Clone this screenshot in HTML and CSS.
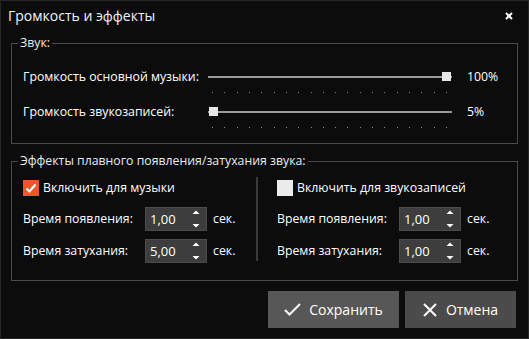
FILE: index.html
```html
<!DOCTYPE html>
<html lang="ru">
<head>
    <meta charset="UTF-8">
    <title>Громкость и эффекты</title>
    <link rel="stylesheet" href="styles.css">
</head>
<body>
    <div class="window">
        <header class="titlebar">
            <span class="title">Громкость и эффекты</span>
            <svg class="close" viewBox="0 0 8 8">
                <path d="M1 1l6 6M7 1l-6 6"></path>
            </svg>
        </header>

        <fieldset class="group sound">
            <legend>Звук:</legend>
            <div class="sliders">
                <div class="slider-row">
                    <span class="label">Громкость основной музыки:</span>
                    <div class="slider">
                        <div class="track"><span class="thumb" style="left: 234px"></span></div>
                        <div class="ticks"><i></i><i></i><i></i><i></i><i></i><i></i><i></i><i></i><i></i><i></i><i></i><i></i><i></i><i></i><i></i><i></i><i></i><i></i><i></i><i></i></div>
                    </div>
                    <span class="value">100%</span>
                </div>
                <div class="slider-row">
                    <span class="label">Громкость звукозаписей:</span>
                    <div class="slider">
                        <div class="track"><span class="thumb" style="left: 1px"></span></div>
                        <div class="ticks"><i></i><i></i><i></i><i></i><i></i><i></i><i></i><i></i><i></i><i></i><i></i><i></i><i></i><i></i><i></i><i></i><i></i><i></i><i></i><i></i></div>
                    </div>
                    <span class="value">5%</span>
                </div>
            </div>
        </fieldset>

        <fieldset class="group effects">
            <legend>Эффекты плавного появления/затухания звука:</legend>
            <div class="columns">
                <div class="column">
                    <label class="check">
                        <span class="box checked">
                            <svg viewBox="0 0 16 16"><path d="M3.5 8.5l3 3 6-7"></path></svg>
                        </span>
                        Включить для музыки
                    </label>
                    <div class="spin-row">
                        <span>Время появления:</span>
                        <div class="spin">
                            <span>1,00</span>
                            <svg class="arrows" viewBox="0 0 8 20"><path d="M0.5 5L4 1.5 7.5 5zM0.5 15L4 18.5 7.5 15z"></path></svg>
                        </div>
                        <span class="unit">сек.</span>
                    </div>
                    <div class="spin-row">
                        <span>Время затухания:</span>
                        <div class="spin">
                            <span>5,00</span>
                            <svg class="arrows" viewBox="0 0 8 20"><path d="M0.5 5L4 1.5 7.5 5zM0.5 15L4 18.5 7.5 15z"></path></svg>
                        </div>
                        <span class="unit">сек.</span>
                    </div>
                </div>

                <div class="separator"></div>

                <div class="column">
                    <label class="check">
                        <span class="box"></span>
                        Включить для звукозаписей
                    </label>
                    <div class="spin-row">
                        <span>Время появления:</span>
                        <div class="spin">
                            <span>1,00</span>
                            <svg class="arrows" viewBox="0 0 8 20"><path d="M0.5 5L4 1.5 7.5 5zM0.5 15L4 18.5 7.5 15z"></path></svg>
                        </div>
                        <span class="unit">сек.</span>
                    </div>
                    <div class="spin-row">
                        <span>Время затухания:</span>
                        <div class="spin">
                            <span>1,00</span>
                            <svg class="arrows" viewBox="0 0 8 20"><path d="M0.5 5L4 1.5 7.5 5zM0.5 15L4 18.5 7.5 15z"></path></svg>
                        </div>
                        <span class="unit">сек.</span>
                    </div>
                </div>
            </div>
        </fieldset>

        <div class="actions">
            <button class="btn save">
                <svg viewBox="0 0 17 13"><path d="M1 7l4.5 4.5L16 1"></path></svg>
                Сохранить
            </button>
            <button class="btn cancel">
                <svg viewBox="0 0 14 14"><path d="M1 1l12 12M13 1L1 13"></path></svg>
                Отмена
            </button>
        </div>
    </div>
</body>
</html>
```

FILE: styles.css
```css
:root {
    --bg: #0c0c0c;
    --text: #ffffff;
    --line: #4a4a4a;
    --accent: #f1552a;
}

* {
    margin: 0;
    padding: 0;
    box-sizing: border-box;
}

body {
    background: var(--bg);
    color: var(--text);
    font-family: "Open Sans", "Noto Sans", sans-serif;
    font-size: 12.3px;
    line-height: 16px;
}

.window {
    width: 529px;
    height: 339px;
    border: 1px solid #262626;
    display: flex;
    flex-direction: column;
}

.titlebar {
    height: 30px;
    display: flex;
    align-items: center;
    justify-content: space-between;
    padding: 0 15px 0 7px;
}

.title {
    font-size: 14px;
    color: #eef4ff;
}

.close {
    width: 8px;
    height: 8px;
    stroke: #ffffff;
    stroke-width: 2;
    fill: none;
}

/* group boxes */
.group {
    border: 1px solid var(--line);
    margin: 0 10px 0 10px;
}

.group legend {
    margin-left: 6px;
    padding: 0 2px;
    line-height: 16px;
    color: #e4ecf4;
}

.sound {
    margin-top: 4px;
}

.effects {
    margin-top: 9px;
}

.sliders {
    padding: 18px 0 4px 11px;
}

.slider-row {
    display: grid;
    grid-template-columns: 185px 244px auto;
    height: 35px;
}

.slider {
    position: relative;
}

.track {
    position: relative;
    height: 16px;
}

.track::before {
    content: "";
    position: absolute;
    left: 0;
    right: 0;
    top: 7px;
    height: 2px;
    background: #9a9a9a;
}

.thumb {
    position: absolute;
    top: 3px;
    width: 9px;
    height: 9px;
    background: #e6e6e6;
}

.ticks {
    display: flex;
    justify-content: space-between;
    padding: 0 5px 0 4px;
    margin-top: 7px;
}

.ticks i {
    width: 1px;
    height: 1px;
    background: #8c8c8c;
}

.value {
    margin-left: 15px;
}

/* effects */
.columns {
    display: flex;
    padding: 11px 0 17px 11px;
}

.column {
    width: 223px;
    display: flex;
    flex-direction: column;
    gap: 8px;
}

.separator {
    width: 2px;
    background: #3a3a3a;
    margin: -3px 19px 2px 10px;
}

.check {
    display: flex;
    align-items: center;
    gap: 4px;
    margin-bottom: 3px;
}

.box {
    width: 16px;
    height: 16px;
    background: #ececec;
    display: flex;
}

.box.checked {
    background: var(--accent);
}

.box svg {
    width: 16px;
    height: 16px;
    stroke: #ffffff;
    stroke-width: 2.2;
    fill: none;
}

.spin-row {
    display: grid;
    grid-template-columns: 122px 62px auto;
    align-items: center;
}

.spin {
    height: 24px;
    background: #3d3d3d;
    border: 1px solid #4c4c4c;
    display: flex;
    align-items: center;
    justify-content: space-between;
    padding: 0 6px 0 4px;
    font-size: 13px;
}

.arrows {
    width: 8px;
    height: 20px;
    fill: #ffffff;
}

.unit {
    margin-left: 6px;
}

/* buttons */
.actions {
    display: flex;
    justify-content: flex-end;
    gap: 6px;
    padding-right: 12px;
    margin-top: 10px;
}

.btn {
    height: 37px;
    border: none;
    color: var(--text);
    font-family: inherit;
    font-size: 14px;
    display: flex;
    align-items: center;
    justify-content: center;
}

.btn svg {
    fill: none;
    stroke: #ffffff;
    stroke-width: 2;
}

.save {
    width: 131px;
    background: #575757;
    gap: 8px;
}

.save svg {
    width: 17px;
    height: 13px;
}

.cancel {
    width: 111px;
    background: #4b4b4b;
    gap: 9px;
}

.cancel svg {
    width: 14px;
    height: 14px;
}
```
